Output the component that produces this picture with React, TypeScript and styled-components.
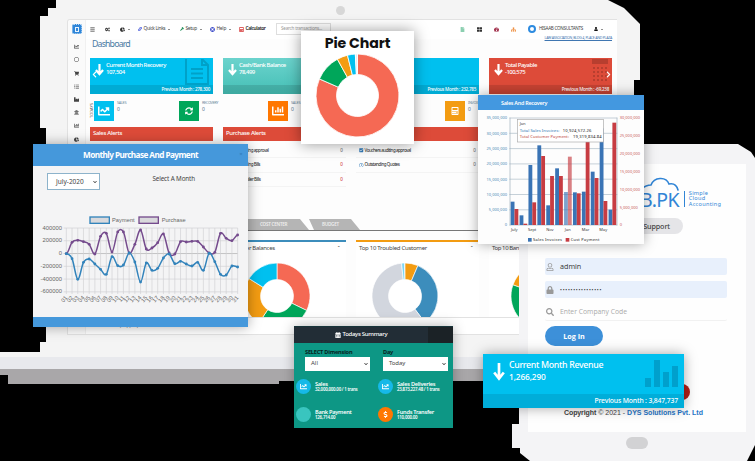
import React from "react";
import styled, { createGlobalStyle, css } from "styled-components";
import {
  FaBars, FaCogs, FaChartPie, FaLink, FaWrench, FaLifeRing, FaCalculator, FaChartLine, FaRegCircle,
  FaShoppingCart, FaListUl, FaIndustry, FaUniversity, FaChartBar, FaSyncAlt, FaSitemap,
  FaUser, FaThLarge, FaChevronLeft, FaChevronRight, FaChevronDown, FaCalendarAlt, FaDollarSign, FaCheckSquare,
  FaRegClock, FaRegUser, FaSearch, FaLock, FaTachometerAlt, FaFile,
} from "react-icons/fa";

const Global = createGlobalStyle`
  * { box-sizing: border-box; }
  body { margin: 0; background: #000; font-family: "Noto Sans", sans-serif; overflow: hidden; }
  svg { display: block; flex: none; }
`;

const Stage = styled.main`
  position: relative; width: 755px; height: 461px; overflow: hidden; background: #000;
`;

const Text = styled.span<{ $s: number; $w?: number; $c?: string; $ls?: number; $f?: string }>`
  display: block; white-space: nowrap; line-height: 1.2;
  font-size: ${(p) => p.$s}px; font-weight: ${(p) => p.$w ?? 400}; color: ${(p) => p.$c ?? "#444"};
  letter-spacing: ${(p) => p.$ls ?? 0}px; ${(p) => p.$f && css`font-family: "${p.$f}", sans-serif;`}
`;

/* ---------- laptop ---------- */
const Laptop = styled.section`
  position: absolute; left: 0; top: 0; width: 640px; height: 384px;
  display: flex; flex-direction: column;
`;
const Lid = styled.div`
  height: 357px; padding: 19px 23px 0 67px; background: #f4f4f4;
  clip-path: polygon(56px 0, 608px 0, 624px 8px, 632px 16px, 640px 24px, 640px 80px, 634px 80px, 634px 357px,
    0 357px, 0 352px, 40px 352px, 40px 342px, 46px 342px, 46px 128px, 40px 128px, 40px 16px, 48px 16px, 48px 8px, 56px 8px);
`;
const Hinge = styled.div`height: 12px; width: 560px; background: #e8e9ed;`;
const Foot = styled.div`
  height: 15px; width: 560px; background: #a9a7a9;
  clip-path: polygon(0 0, 100% 0, 100% 12px, 279px 12px, 279px 15px, 8px 15px, 8px 6px, 0 6px);
`;
const Camera = styled.i`
  position: absolute; left: 336px; top: 6px; width: 9px; height: 9px; border-radius: 50%; background: #d7d7d7;
`;
const Screen = styled.div`
  height: 316px; display: grid; grid-template-columns: 18px 1fr; background: #fdfdfd;
  border: solid #e2e2e2; border-width: 1px 0 1px 1px; border-radius: 3px 0 0 0; overflow: hidden;
`;
const Side = styled.nav`
  display: flex; flex-direction: column; align-items: center; gap: 8.2px; padding-top: 4px; background: #fafafa;
  border-right: 1px solid #f0f0f0; color: #444;
`;
const Brand = styled.div`
  width: 10px; height: 10px; margin-bottom: 2px; background: #2f86d8; border: 1px dotted #bcdcf8; border-radius: 2px;
  display: flex; justify-content: center; align-items: center;
`;
const BrandCore = styled.i`width: 4px; height: 5px; border: 1px solid #e7f3ff;`;
const Page = styled.div`display: flex; flex-direction: column; min-width: 0;`;
const TopBar = styled.header`
  height: 19px; display: flex; align-items: center; padding: 0 0 1px 4px; background: #fff; color: #333;
`;
const NavItem = styled.div<{ $w: number }>`
  width: ${(p) => p.$w}px; display: flex; align-items: center; gap: 1.5px; flex: none; font-size: 5px;
`;
const Caret = styled.i`
  border: 1.3px solid transparent; border-top-color: #222; margin: 2px 0 0 1.5px;
`;
const SearchBox = styled.div`
  width: 55px; height: 12px; border: 1px solid #dedede; padding: 2px 4px; margin-right: 129px;
`;
const UserDot = styled.i`
  width: 8px; height: 8px; border-radius: 50%; border: 2px solid #2d8be0; background: #fff; margin-right: 3px;
`;
const Heading = styled.div`
  height: 19px; display: flex; justify-content: space-between; padding: 0 5px 0 6px; align-items: flex-start;
`;
const SubLink = styled.div`padding-top: 0; margin-top: -3px; text-decoration: underline; color: #3f76b1;`;
const cols = css`display: grid; grid-template-columns: repeat(4, 123px); column-gap: 10px; padding-left: 4px;`;
const Stats = styled.div`${cols} height: 36px;`;
const Stat = styled.article<{ $bg: string }>`
  position: relative; background: ${(p) => p.$bg}; display: flex; flex-direction: column; justify-content: space-between; color: #fff;
`;
const StatMain = styled.div`display: flex; padding: 4px 0 0 5px; gap: 2px; align-items: flex-start;`;
const StatFoot = styled.div`
  height: 9px; background: rgba(0,0,0,.11); display: flex; justify-content: flex-end; align-items: center; padding-right: 3px;
`;
const Ghost = styled.div`position: absolute; right: 4px; top: 1px;`;
const Step = styled.div<{ $right?: boolean }>`
  position: absolute; top: 13px; ${(p) => (p.$right ? "right: 0" : "left: 1px")}; color: #fff; font-size: 8px;
`;
const Minis = styled.div`
  height: 33px; padding: 7px 0 0 4px; display: grid; grid-template-columns: 4px 85px 89px 85px 92px 1fr;
`;
const Vertical = styled.div`
  writing-mode: vertical-rl; transform: rotate(180deg); font-size: 4px; line-height: 4px; color: #555; height: 20px; text-align: center;
`;
const Mini = styled.div`display: flex; gap: 3px;`;
const MiniIcon = styled.div<{ $bg: string }>`
  width: 20px; height: 20px; background: ${(p) => p.$bg}; color: #fff; display: grid; place-items: center; font-size: 11px;
`;
const Alerts = styled.div`${cols} height: 92px; align-items: start;`;
const AlertHead = styled.div`height: 14px; background: #dd4b39; padding: 3px 3px 0;`;
const AlertRow = styled.div`
  height: 14.4px; display: flex; justify-content: space-between; align-items: center; padding: 0 3px;
  border-bottom: 1px solid #f4f4f4;
`;
const RowLabel = styled.div`display: flex; align-items: center; gap: 1px; color: #337ab7; font-size: 4.5px;`;
const AlertBody = styled.div`padding-top: 3px;`;
const Tabs = styled.div`
  height: 12px; display: flex; padding-left: 155px; border-bottom: 1.5px solid #777; margin-right: 4px;
`;
const Tab = styled.div<{ $w: number; $p: number }>`
  width: ${(p) => p.$w}px; height: 11px; background: #b5b5b5; display: flex; align-items: center; padding-left: ${(p) => p.$p}px;
  clip-path: polygon(0 0, calc(100% - 9px) 0, 100% 100%, 5px 100%);
`;
const Charts = styled.div`${cols} padding-top: 9px; height: 87px; border-bottom: 1px solid #e2e2e2;`;
const ChartBox = styled.div<{ $c: string }>`border-top: 2px solid ${(p) => p.$c}; height: 77px; overflow: hidden; background: #fff;`;
const ChartTitle = styled.div`height: 21px; padding: 3px 6px 0 3px; display: flex; justify-content: space-between;`;
const DonutWrap = styled.div<{ $ml: number }>`margin-left: ${(p) => p.$ml}px; height: 66px;`;
const PageFoot = styled.div`flex: 1; background: #fff; padding: 5px 0 0 4px;`;

type Slice = [number, number, string];
function Donut({ d, hole, slices }: { d: number; hole: number; slices: Slice[] }) {
  const pt = (a: number, r: number) => {
    const t = ((a - 90) * Math.PI) / 180;
    return `${(50 + r * Math.cos(t)).toFixed(2)} ${(50 + r * Math.sin(t)).toFixed(2)}`;
  };
  return (
    <svg width={d} height={d} viewBox="0 0 100 100">
      {slices.map(([a, b, c]) => {
        const big = b - a > 180 ? 1 : 0;
        return (
          <path key={a} fill={c} stroke="#fff" strokeWidth="1"
            d={`M${pt(a, 50)}A50 50 0 ${big} 1 ${pt(b, 50)}L${pt(b, hole)}A${hole} ${hole} 0 ${big} 0 ${pt(a, hole)}Z`} />
        );
      })}
    </svg>
  );
}

function DownArrow() {
  return (
    <svg width="9" height="14" viewBox="0 0 14 22" preserveAspectRatio="none">
      <path d="M7 3V19M1.5 12.5L7 19L12.5 12.5" stroke="#fff" strokeWidth="3.4" fill="none" />
    </svg>
  );
}

function PageGhost() {
  return (
    <svg width="24" height="26" viewBox="0 0 24 26" fill="none" stroke="#000" strokeOpacity=".16" strokeWidth="2">
      <path d="M1 0V25H23V6L17 0V6H23M6 10H18M6 14.5H18M6 19H18" />
    </svg>
  );
}

function KeypadGhost() {
  return (
    <svg width="16" height="26" viewBox="0 0 16 26" fill="#000" fillOpacity=".17">
      <rect width="16" height="5" />
      {[8, 12, 16, 20].map((y) => [1, 5, 9, 13].map((x) => <rect key={`${x}-${y}`} x={x} y={y} width="2" height="2" />))}
    </svg>
  );
}

const stats = [
  { t: "Current Month Recovery", n: "107,504", p: "Previous Month : 278,300", bg: "#00c0ef", icon: <PageGhost /> },
  { t: "Cash/Bank Balance", n: "78,499", p: "", bg: "linear-gradient(#6bd3cd, #45bfb5)", icon: null },
  { t: "Total Receivable", n: "232,785", p: "Previous Month : 232,785", bg: "#00c0ef", icon: null },
  { t: "Total Payable", n: "-100,575", p: "Previous Month : -69,238", bg: "#dd4b39", icon: <KeypadGhost /> },
];

function Dashboard() {
  return (
    <Laptop>
      <Lid>
        <Screen>
          <Side>
            <Brand><BrandCore /></Brand>
            {[FaChartLine, FaRegCircle, FaShoppingCart, FaListUl, FaIndustry, FaUniversity, FaChartBar, FaChartPie].map((I, i) => (
              <I key={i} size={5} />
            ))}
          </Side>
          <Page>
            <TopBar>
              <NavItem $w={15}><FaBars /></NavItem>
              <NavItem $w={15}><FaCogs /></NavItem>
              <NavItem $w={18}><FaChartPie /><Caret /></NavItem>
              <NavItem $w={42}><FaLink color="#3d50d8" size={4} /><Text $s={4.8} $ls={-0.35}>Quick Links</Text><Caret /></NavItem>
              <NavItem $w={30}><FaWrench color="#168a52" size={4} /><Text $s={4.8} $ls={-0.35}>Setup</Text><Caret /></NavItem>
              <NavItem $w={29}><FaLifeRing color="#3948c8" /><Text $s={4.8} $ls={-0.2}>Help</Text><Caret /></NavItem>
              <NavItem $w={37}><FaCalculator color="#d32f2f" /><Text $s={4.8} $w={600} $c="#222" $ls={-0.38}>Calculator</Text></NavItem>
              <SearchBox><Text $s={4.6} $c="#999" $ls={-0.22}>Search transactions...</Text></SearchBox>
              <NavItem $w={17}><FaFile color="#8bcfb0" /></NavItem>
              <NavItem $w={17}><FaThLarge /></NavItem>
              <NavItem $w={17}><FaTachometerAlt color="#9c2340" /></NavItem>
              <NavItem $w={17}><FaSitemap color="#eb7a1c" /></NavItem>
              <UserDot />
              <NavItem $w={55}><Text $s={4.6} $ls={-0.3}>HISAAB CONSULTANTS</Text></NavItem>
              <NavItem $w={10}><FaUser size={4} color="#111" /><Caret /></NavItem>
            </TopBar>
            <Heading>
              <Text $s={8.8} $c="#4b7ba3" $ls={-0.85}>Dashboard</Text>
              <SubLink><Text $s={3.6} $c="#3f76b1" $ls={-0.28}>LAW ASSOCIATION, BLDG 4, PLACE AND PLAZA</Text></SubLink>
            </Heading>
            <Stats>
              {stats.map((s, i) => (
                <Stat key={s.t} $bg={s.bg}>
                  {s.icon && <Ghost>{s.icon}</Ghost>}
                  {i === 0 && <Step><FaChevronLeft size={7} /></Step>}
                  {i === 3 && <Step $right><FaChevronRight size={7} /></Step>}
                  <StatMain>
                    <DownArrow />
                    <div>
                      <Text $s={6} $w={500} $c="#fff" $ls={-0.47}>{s.t}</Text>
                      <Text $s={6} $w={500} $c="#fff" $ls={-0.5}>{s.n}</Text>
                    </div>
                  </StatMain>
                  <StatFoot><Text $s={4.6} $w={500} $c="#fff" $ls={-0.28}>{s.p}</Text></StatFoot>
                </Stat>
              ))}
            </Stats>
            <Minis>
              <Vertical>TODAYS</Vertical>
              {([["#00c0ef", "SALES", FaChartLine], ["#00a65a", "RECOVERY", FaSyncAlt], ["#ff7701", "SALES", FaChartBar],
                ["#00c0ef", "BILLS", FaChartLine], ["#f39c12", "INVOICE", FaCalculator]] as const).map(([c, l, I], i) => (
                <Mini key={i}>
                  <MiniIcon $bg={c}><I size={i === 0 || i === 2 ? 12 : 8} /></MiniIcon>
                  <div><Text $s={3.8} $c="#69869b" $ls={-0.3}>{l}</Text><Text $s={5} $c="#52728a">0</Text></div>
                </Mini>
              ))}
            </Minis>
            <Alerts>
              {[
                ["Sales Alerts", []],
                ["Purchase Alerts", ["Bills pending approval", "Outstanding Bills", "Late Supplier Bills"]],
                ["", ["Vouchers auditing approval", "Outstanding Quotes"]],
                ["", []],
              ].map(([h, rows], i) => (
                <div key={i}>
                  <AlertHead><Text $s={6} $w={500} $c="#fff" $ls={-0.33}>{h as string}</Text></AlertHead>
                  <AlertBody>
                    {(rows as string[]).map((r, j) => (
                      <AlertRow key={r}>
                        <RowLabel>{j ? <FaRegClock /> : <FaCheckSquare />}<Text $s={4.5} $c="#222" $ls={-0.45}>{r}</Text></RowLabel>
                        <Text $s={4.6} $c={i === 1 && j ? "#c22" : "#555"}>0</Text>
                      </AlertRow>
                    ))}
                  </AlertBody>
                </div>
              ))}
            </Alerts>
            <Tabs>
              <Tab $w={68} $p={19}><Text $s={4.6} $w={600} $c="#eee" $ls={-0.25}>COST CENTER</Text></Tab>
              <Tab $w={51} $p={13}><Text $s={4.6} $w={600} $c="#eee" $ls={-0.25}>BUDGET</Text></Tab>
            </Tabs>
            <Charts>
              <ChartBox $c="#3c8dbc" />
              <ChartBox $c="#3c8dbc">
                <ChartTitle><Text $s={6} $ls={-0.32}>Customer Balances</Text><Text $s={6}>ˆ</Text></ChartTitle>
                <DonutWrap $ml={21}>
                  <Donut d={66} hole={25} slices={[[0, 116, "#f56954"], [116, 214, "#00a65a"], [214, 302, "#f39c12"], [302, 360, "#00c0ef"]]} />
                </DonutWrap>
              </ChartBox>
              <ChartBox $c="#f39c12">
                <ChartTitle><Text $s={6} $ls={-0.27}>Top 10 Troubled Customer</Text><Text $s={6}>ˆ</Text></ChartTitle>
                <DonutWrap $ml={16}>
                  <Donut d={66} hole={25} slices={[[0, 23, "#f39c12"], [23, 143, "#3c8dbc"], [143, 354, "#d2d6de"], [354, 359, "#7cd6f3"]]} />
                </DonutWrap>
              </ChartBox>
              <ChartBox $c="#3c8dbc">
                <ChartTitle><Text $s={6} $ls={-0.42}>Top 10 Bank</Text></ChartTitle>
                <DonutWrap $ml={22}>
                  <Donut d={66} hole={25} slices={[[0, 180, "#f56954"], [180, 290, "#00a65a"], [290, 360, "#f39c12"]]} />
                </DonutWrap>
              </ChartBox>
            </Charts>
            <PageFoot><Text $s={4.8} $w={600} $c="#444" $ls={-0.22}>DYS Decisions(PK) (C.V) - Date : 10/09/2021 - Time : 12:29</Text></PageFoot>
          </Page>
        </Screen>
      </Lid>
      <Hinge />
      <Foot />
      <Camera />
    </Laptop>
  );
}

/* ---------- tablet ---------- */
const Tablet = styled.section`
  position: absolute; left: 512px; top: 144px; width: 243px; height: 317px; background: #f4f4f6;
  padding: 20px 9px 0 16px; display: flex; flex-direction: column; align-items: center;
  clip-path: polygon(7px 0, 226px 0, 239px 8px, 243px 14px, 243px 301px, 235px 317px, 18px 317px, 8px 309px, 8px 304px, 0 304px, 0 280px, 7px 280px);
`;
const TabletScreen = styled.div`
  position: relative; width: 218px; height: 268px; flex: none; background: #fefefe; padding: 94px 19px 0 17px;
  display: flex; flex-direction: column; align-items: flex-start;
`;
const Logo = styled.div`
  position: absolute; left: 112px; top: 13px; display: flex; align-items: flex-end; color: #3185d6; height: 34px;
`;
const Cloud = styled.svg`position: absolute; left: 0; top: 0;`;
const LogoTag = styled.div`
  border-left: 1px solid #3185d6; padding-left: 4px; margin: 0 0 4px 5px; height: 16px;
  display: flex; flex-direction: column; justify-content: space-between;
`;
const TagLine = styled.span`display: block; font-size: 5.6px; line-height: 5.4px; color: #3185d6; letter-spacing: 0.28px;`;
const Support = styled.div`
  position: absolute; left: 95px; top: 54px; width: 60px; height: 16px; border-radius: 8px; background: #e5e5e8;
  display: flex; align-items: center; justify-content: flex-end; padding-right: 13px;
`;
const Field = styled.div<{ $plain?: boolean }>`
  width: 182px; height: 17px; margin-bottom: 6px; border-radius: 2px; display: flex; align-items: center; gap: 6px; padding-left: 1px;
  color: #999; font-size: 8px; background: ${(p) => (p.$plain ? "transparent" : "#e8f0fc")};
  ${(p) => p.$plain && "border-bottom: 1px solid #f1f1f1;"}
`;
const Login = styled.button`
  width: 58px; height: 20px; border: 0; border-radius: 10px; background: #3d90d9; color: #fff; padding: 0;
  font: 700 7.2px "Open Sans", sans-serif; margin-top: -1px;
`;
const RedDot = styled.i`position: absolute; left: 146px; top: 220px; width: 16px; height: 16px; border-radius: 50%; background: #b32017;`;
const Copyright = styled.div`
  margin: 63px 0 0 19px; display: flex; gap: 2px;
`;
const Home = styled.i`width: 22px; height: 12px; border-radius: 6px; background: #d2d2d4; margin: 5px 0 0 0;`;

function TabletView() {
  return (
    <Tablet>
      <TabletScreen>
        <Logo>
          <Cloud width="42" height="20" viewBox="0 0 42 20" fill="none" stroke="#3185d6" strokeWidth="1.6" strokeLinecap="round">
            <path d="M1 12C5 9 8 8 11 8C14 0 26 -1 29 7C34 6 37 9 38 13" />
          </Cloud>
          <Text $s={19.5} $c="#3185d6" $ls={-0.7}>B.PK</Text>
          <LogoTag>
            {["Simple", "Cloud", "Accounting"].map((t) => <TagLine key={t}>{t}</TagLine>)}
          </LogoTag>
        </Logo>
        <Support><Text $s={7.2} $c="#444" $w={500} $ls={-0.1}>Support</Text></Support>
        <Field><FaRegUser /><Text $s={7.2} $w={500} $c="#333" $f="Open Sans">admin</Text></Field>
        <Field><FaLock /><Text $s={5} $c="#333" $ls={0.75}>••••••••••••••••</Text></Field>
        <Field $plain><FaSearch /><Text $s={6.8} $c="#aaa" $f="Open Sans">Enter Company Code</Text></Field>
        <Login>Log In</Login>
        <RedDot />
        <Copyright>
          <Text $s={7} $w={700} $f="Liberation Sans" $ls={-0.1}>Copyright</Text>
          <Text $s={7} $f="Liberation Sans">© 2021 -</Text>
          <Text $s={7} $w={700} $c="#2575c7" $f="Liberation Sans">DYS Solutions Pvt. Ltd</Text>
        </Copyright>
      </TabletScreen>
      <Home />
    </Tablet>
  );
}

/* ---------- floating cards ---------- */
const PieCard = styled.section`
  position: absolute; left: 301px; top: 31px; width: 113px; height: 113px; background: #fff; box-shadow: 0 0 14px rgba(0,0,0,.4);
  display: flex; flex-direction: column; align-items: center;
`;
const PieTitle = styled.h2`
  margin: 0; height: 23px; font: 700 14.2px/24px "Poppins", "Inter", sans-serif; color: #111; letter-spacing: -0.1px;
`;
const MonthCard = styled.section`
  position: absolute; left: 33px; top: 144px; width: 215px; height: 183px; background: #f4f4f5; box-shadow: 0 0 12px rgba(0,0,0,.35);
  display: flex; flex-direction: column; border-bottom: 10px solid #4598db;
`;
const MonthHead = styled.header`
  height: 22px; flex: none; background: #4598db; display: grid; grid-template-columns: 14px 1fr 14px; align-items: center; justify-items: center;
`;
const MonthTools = styled.div`height: 45px; flex: none; padding: 7px 53px 0 14px; display: flex; justify-content: space-between; align-items: flex-start;`;
const MonthHint = styled.div`padding-top: 2px;`;
const Picker = styled.div<{ $w: number; $h: number; $line?: boolean }>`
  width: ${(p) => p.$w}px; height: ${(p) => p.$h}px; background: #fff; display: flex; align-items: center; justify-content: space-between;
  padding: 0 2px 0 ${(p) => (p.$line ? 8 : 6)}px; ${(p) => p.$line && "border: 1px solid #8db3cb;"}
`;
const SalesCard = styled.section`
  position: absolute; left: 478px; top: 95px; width: 166px; height: 149px; background: #fdfdfd; box-shadow: 0 0 12px rgba(0,0,0,.35);
`;
const SalesHead = styled.header`height: 15px; background: #4398e0; padding: 5px 23px;`;
const SummaryCard = styled.section`
  position: absolute; left: 294px; top: 326px; width: 159px; height: 102px; background: #0d9785; box-shadow: 0 0 12px rgba(0,0,0,.3);
`;
const SummaryHead = styled.header`
  height: 17px; background: linear-gradient(90deg, #222d36 134px, #1b2226 134px); display: flex; align-items: center; gap: 1.5px;
  padding-left: 41px; color: #fff; font-size: 6px; border-top: 1px solid #17343a;
`;
const Filters = styled.div`display: grid; grid-template-columns: 78px 65px; row-gap: 1px; padding: 6px 0 0 11px;`;
const Entries = styled.div`display: grid; grid-template-columns: 82px 75px; row-gap: 13px; padding: 8.5px 0 0 2px;`;
const Entry = styled.div`display: flex; gap: 4px; height: 15px; align-items: center;`;
const Bubble = styled.div<{ $bg: string }>`
  width: 15px; height: 15px; border-radius: 50%; background: ${(p) => p.$bg}; color: #fff; display: grid; place-items: center; font-size: 7px;
`;
const RevenueCard = styled.section`
  position: absolute; left: 483px; top: 354px; width: 201px; height: 54px; background: #00c0ef; box-shadow: 0 0 12px rgba(0,0,0,.35);
  display: flex; flex-direction: column; justify-content: space-between;
`;
const RevenueMain = styled.div`display: flex; padding: 6px 5px 0 10px; gap: 4px; height: 40px;`;
const RevenueText = styled.div`flex: 1; display: flex; flex-direction: column; gap: 1px;`;
const RevenueFoot = styled.div`height: 14px; background: #00add9; display: flex; justify-content: flex-end; align-items: center; padding-right: 6px;`;

const purchase = [340, 306, 300, 304, 312, 341, 288, 279, 335, 275, 275, 338, 312, 269, 326, 323, 307, 281, 338, 341, 304, 305, 303, 303, 320, 338, 336, 279, 294, 301, 284];
const payment = [340, 355, 417, 366, 356, 371, 387, 402, 349, 376, 374, 338, 365, 425, 368, 390, 384, 353, 341, 370, 363, 371, 377, 366, 390, 339, 364, 402, 404, 377, 380];

function smooth(v: number[]) {
  const x = (i: number) => 100 + 17.13 * i;
  return v.reduce((d, y, i) => {
    if (!i) return `M${x(0)} ${y}`;
    const s = (k: number) => (k <= 0 || k >= v.length - 1 ? 0 : (v[k + 1] - v[k - 1]) / 2);
    return `${d}C${x(i) - 11.4} ${v[i - 1] + s(i - 1) / 3} ${x(i) - 5.7} ${y - s(i) / 3} ${x(i)} ${y}`;
  }, "");
}

function LineChart() {
  return (
    <svg width="215" height="93" viewBox="0 212 645 279" fontFamily="Liberation Sans" fontSize="17" fill="#666">
      {[["Payment", "#3283bb", 171, 237], ["Purchase", "#754b8d", 318, 386]].map(([t, c, x, tx]) => (
        <g key={t as string}>
          <rect x={x} y="230" width="58" height="19" fill="#d9d9dc" stroke={c as string} strokeWidth="4" />
          <text x={tx} y="245" textLength={t === "Payment" ? 68 : 72}>{t}</text>
        </g>
      ))}
      {[400000, 200000, 0, -200000, -400000, -600000].map((n, i) => (
        <g key={n}>
          <line x1="92" x2="614" y1={263 + i * 38.3} y2={263 + i * 38.3} stroke={n ? "#d0d0d3" : "#aaa"} strokeWidth="2" />
          <text x="87" y={268 + i * 38.3} textAnchor="end" fontSize="17.5">{n}</text>
        </g>
      ))}
      {purchase.map((_, i) => {
        const x = 100 + 17.13 * i;
        return (
          <g key={i}>
            <line x1={x} x2={x} y1="263" y2="461" stroke="#d0d0d3" strokeWidth="2" />
            <text transform={`translate(${x + 4} 473) rotate(-48)`} textAnchor="end" fontSize="17">{String(i + 1).padStart(2, "0")}</text>
          </g>
        );
      })}
      {([[purchase, "#754b8d"], [payment, "#3283bb"]] as const).map(([v, c]) => (
        <g key={c} fill={c}>
          <path d={smooth(v)} fill="none" stroke={c} strokeWidth="4.5" />
          {v.map((y, i) => <circle key={i} cx={100 + 17.13 * i} cy={y} r="4.2" />)}
        </g>
      ))}
    </svg>
  );
}

const blueTops = [350, 391, 240, 181, 361, 250, 321, 322, 320, 260, 130, 374];
const redTops = [372, 416, 352, 213, 273, 273, 215, 325, 160, 279, 348, 113];

function BarChart() {
  return (
    <svg width="166" height="134" viewBox="24 75 498 402" fontFamily="Noto Sans" fontSize="12">
      {[0, 1, 2, 3, 4, 5, 6, 7].map((i) => (
        <g key={i}>
          <line x1="118" x2="442" y1={99 + i * 45.9} y2={99 + i * 45.9} stroke="#a9bac5" strokeWidth="2" />
          <text x="111" y={103 + i * 45.9} textAnchor="end" fill="#4c89b5">{i === 7 ? "0" : `${35 - i * 5},000,000`}</text>
        </g>
      ))}
      {[0, 1, 2, 3, 4, 5, 6].map((i) => (
        <text key={i} x="449" y={103 + i * 53.5} fill="#c95c5c">{i === 6 ? "0" : `${30 - i * 5},000,000`}</text>
      ))}
      <path d="M120 98V421M441 98V421" stroke="#9db0bc" strokeWidth="2" />
      {blueTops.map((y, i) => (
        <g key={i} opacity={i === 6 ? 0.65 : 1}>
          <rect x={122 + i * 26.7} y={y} width="11.5" height={420 - y} fill="#3a74b5" />
          <rect x={133.5 + i * 26.7} y={redTops[i]} width="11.5" height={420 - redTops[i]} fill="#c73c42" />
        </g>
      ))}
      {["July", "Sept", "Nov", "Jan", "Mar", "May"].map((m, i) => (
        <text key={m} x={133 + i * 53.4} y="437" textAnchor="middle" fill="#333">{m}</text>
      ))}
      <rect x="142" y="103" width="258" height="68" fill="#fff" stroke="#aaa" strokeWidth="2" />
      <g fontSize="12.5">
        <text x="149" y="121" fill="#444">Jan</text>
        <text x="149" y="140" fill="#2775b2" textLength="119">Total Sales Invoices:</text>
        <text x="278" y="140" fill="#222" textLength="86">10,924,572.26</text>
        <text x="149" y="160" fill="#bd463c" textLength="148">Total Customer Payment:</text>
        <text x="309" y="160" fill="#222" textLength="86">19,319,834.84</text>
      </g>
      <rect x="174" y="459" width="11" height="11" fill="#3a74b5" />
      <text x="189" y="468" fill="#222" textLength="87">Sales Invoices</text>
      <rect x="287" y="459" width="11" height="11" fill="#c73c42" />
      <text x="302" y="468" fill="#222" textLength="86">Cust Payment</text>
    </svg>
  );
}

const entries = [
  ["Sales", "32,000,000.00 / 1 trans", "#16b9e8", <FaChartLine />],
  ["Sales Deliveries", "23,873,227.48 / 1 trans", "#16b9e8", <FaChartLine />],
  ["Bank Payment", "126,714.00", "#39c5bf", null],
  ["Funds Transfer", "110,000.00", "#ff7701", <FaDollarSign />],
] as const;

export default function App() {
  return (
    <Stage>
      <Global />
      <Dashboard />
      <TabletView />
      <PieCard>
        <PieTitle>Pie Chart</PieTitle>
        <Donut d={83} hole={25.3} slices={[[0, 293.5, "#f56954"], [293.5, 331, "#00a65a"], [331, 346, "#f39c12"], [346, 357, "#00c0ef"], [357, 360, "#e6e9ef"]]} />
      </PieCard>
      <MonthCard>
        <MonthHead>
          <i /><Text $s={8.2} $w={700} $c="#fff" $ls={-0.56}>Monthly Purchase And Payment</Text><Text $s={6} $c="#2f79b7">×</Text>
        </MonthHead>
        <MonthTools>
          <Picker $w={53} $h={17} $line><Text $s={6.5}>July-2020</Text><FaChevronDown size={4} color="#222" /></Picker>
          <MonthHint><Text $s={6.3} $ls={-0.13}>Select A Month</Text></MonthHint>
        </MonthTools>
        <LineChart />
      </MonthCard>
      <SalesCard>
        <SalesHead><Text $s={5.4} $w={600} $c="#fff" $ls={-0.25}>Sales And Recovery</Text></SalesHead>
        <BarChart />
      </SalesCard>
      <SummaryCard>
        <SummaryHead><FaCalendarAlt /><Text $s={6} $w={500} $c="#fff" $ls={-0.3}>Todays Summary</Text></SummaryHead>
        <Filters>
          <Text $s={5.6} $w={700} $c="#08231f" $ls={-0.2}>SELECT Dimension</Text>
          <Text $s={5.6} $w={700} $c="#08231f" $ls={-0.2}>Day</Text>
          <Picker $w={65} $h={14}><Text $s={6}>All</Text><FaChevronDown size={4} color="#222" /></Picker>
          <Picker $w={65} $h={14}><Text $s={6} $ls={-0.1}>Today</Text><FaChevronDown size={4} color="#222" /></Picker>
        </Filters>
        <Entries>
          {entries.map(([t, n, c, icon]) => (
            <Entry key={t}>
              <Bubble $bg={c}>{icon}</Bubble>
              <div>
                <Text $s={5.6} $w={600} $c="#fff" $ls={-0.25}>{t}</Text>
                <Text $s={4.4} $w={600} $c="#fff" $ls={-0.22}>{n}</Text>
              </div>
            </Entry>
          ))}
        </Entries>
      </SummaryCard>
      <RevenueCard>
        <RevenueMain>
          <svg width="12" height="24" viewBox="0 0 12 24">
            <path d="M6 3V18M1.2 12.5L6 18.5L10.8 12.5" stroke="#fff" strokeWidth="2.7" fill="none" />
          </svg>
          <RevenueText>
            <Text $s={8.8} $w={500} $c="#fff" $ls={-0.32}>Current Month Revenue</Text>
            <Text $s={8.3} $w={500} $c="#fff" $ls={-0.12}>1,266,290</Text>
          </RevenueText>
          <svg width="34" height="31" viewBox="0 0 34 31" fill="#00a0cc">
            <path d="M0 18h6v9H0zM9 -3h6v30H9zM18 12h6v15h-6zM27 6h6v21h-6z" />
          </svg>
        </RevenueMain>
        <RevenueFoot><Text $s={6.8} $w={500} $c="#fff" $ls={-0.15}>Previous Month : 3,847,737</Text></RevenueFoot>
      </RevenueCard>
    </Stage>
  );
}
